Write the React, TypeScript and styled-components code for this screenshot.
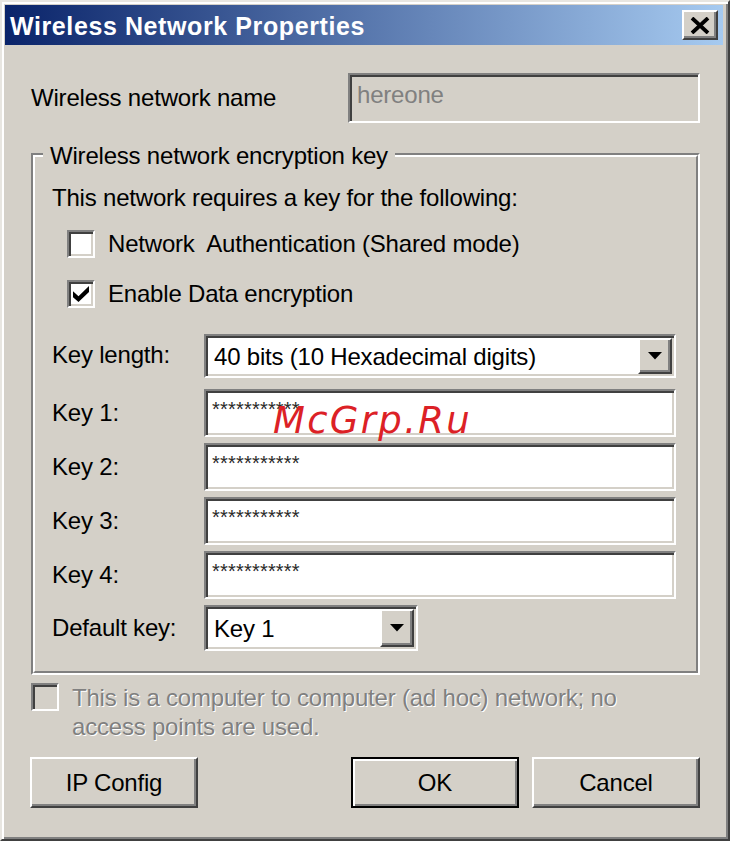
import React from "react";
import styled, { createGlobalStyle, css } from "styled-components";

const Global = createGlobalStyle`
  html, body { margin: 0; padding: 0; background: #d4d0c8; }
  body { width: 730px; height: 841px; overflow: hidden; font-family: "Liberation Sans", Arial, sans-serif; }
  * { box-sizing: border-box; }
`;

const FACE = "#d4d0c8";

const raised = css`
  border: 2px solid;
  border-color: #ffffff #404040 #404040 #ffffff;
  box-shadow: inset -2px -2px 0 #808080, inset 2px 2px 0 ${FACE};
  background: ${FACE};
`;

const sunken = css`
  border: 2px solid;
  border-color: #808080 #ffffff #ffffff #808080;
  box-shadow: inset 2px 2px 0 #404040, inset -2px -2px 0 ${FACE};
`;

const Window = styled.div`
  position: relative;
  width: 730px;
  height: 841px;
  background: ${FACE};
  border: 2px solid;
  border-color: #e8e6e1 #404040 #404040 #e8e6e1;
  box-shadow: inset 2px 2px 0 #ffffff, inset -2px -2px 0 #808080;
  padding: 3px 5px 4px 3px;
  display: flex;
  flex-direction: column;
`;

const TitleBar = styled.div`
  height: 40px;
  flex: none;
  background: linear-gradient(to right, #0a246a, #a6caf0);
  display: flex;
  align-items: center;
  justify-content: space-between;
  padding: 0 5px 0 5px;
`;

const TitleText = styled.div`
  color: #fff;
  font-weight: bold;
  font-size: 25px;
  letter-spacing: 0.6px;
  line-height: 30px;
  padding-top: 2px;
`;

const CloseButton = styled.div`
  ${raised};
  width: 36px;
  height: 30px;
  display: flex;
  align-items: center;
  justify-content: center;
`;

const Body = styled.div`
  flex: 1;
  display: flex;
  flex-direction: column;
  padding: 28px 23px 0 26px;
  font-size: 24px;
  letter-spacing: -0.2px;
  color: #000;
`;

const NameRow = styled.div`
  display: flex;
  align-items: center;
  justify-content: space-between;
  height: 50px;
`;

const Label = styled.div`
  font-size: 24px;
  line-height: 28px;
  white-space: nowrap;
`;

const TextField = styled.div<{ $disabled?: boolean; $h?: number }>`
  ${sunken};
  height: ${(p) => p.$h ?? 48}px;
  background: ${(p) => (p.$disabled ? FACE : "#fff")};
  color: ${(p) => (p.$disabled ? "#808080" : "#000")};
  padding: 4px 7px;
  line-height: 28px;
  white-space: nowrap;
`;

const NameField = styled(TextField)`
  width: 352px;
  padding-top: 6px;
`;

const PasswordField = styled(TextField)`
  font-size: 20px;
  line-height: 22px;
  letter-spacing: 0.2px;
  color: #2a2a2a;
  padding: 7px 6px;
`;

const GroupOuter = styled.div`
  position: relative;
  margin-top: 30px;
  border: 2px solid;
  border-color: #808080 #ffffff #ffffff #808080;
`;

const GroupInner = styled.div`
  border: 2px solid;
  border-color: #ffffff #808080 #808080 #ffffff;
  padding: 27px 20px 20px 17px;
  display: flex;
  flex-direction: column;
`;

const Legend = styled.div`
  position: absolute;
  top: -13px;
  left: 10px;
  padding: 0 7px;
  background: ${FACE};
  font-size: 24px;
  line-height: 28px;
`;

const CheckRow = styled.div<{ $mt: number; $ml?: number }>`
  display: flex;
  align-items: center;
  gap: 13px;
  height: 28px;
  margin-top: ${(p) => p.$mt}px;
  margin-left: ${(p) => p.$ml ?? 15}px;
`;

const Box = styled.div<{ $disabled?: boolean }>`
  ${sunken};
  width: 28px;
  height: 28px;
  flex: none;
  background: ${(p) => (p.$disabled ? FACE : "#fff")};
  display: flex;
  align-items: center;
  justify-content: center;
`;

const KeyGrid = styled.div`
  display: grid;
  grid-template-columns: 152px 1fr;
  row-gap: 6px;
  align-items: center;
  margin-top: 26px;
`;

const Select = styled.div<{ $w?: number; $h: number }>`
  ${sunken};
  background: #fff;
  height: ${(p) => p.$h}px;
  width: ${(p) => (p.$w ? `${p.$w}px` : "100%")};
  display: flex;
  align-items: center;
  padding: 2px 2px 2px 8px;
  line-height: 28px;
`;

const SelectText = styled.div`
  flex: 1;
  white-space: nowrap;
  padding-top: 1px;
`;

const DropButton = styled.div`
  ${raised};
  width: 34px;
  height: 100%;
  flex: none;
  display: flex;
  align-items: center;
  justify-content: center;
`;

const KeyLengthSelect = styled(Select)`
  margin-bottom: 5px;
`;

const KeyLengthLabel = styled(Label)`
  margin-bottom: 8px;
`;

const AdhocRow = styled.div`
  display: flex;
  align-items: flex-start;
  gap: 13px;
  margin-top: 8px;
`;

const DisabledText = styled.div`
  color: #808080;
  text-shadow: 1px 1px 0 #ffffff;
  line-height: 29px;
`;

const ButtonRow = styled.div`
  display: flex;
  margin-top: 16px;
  margin-left: -1px;
`;

const Button = styled.div<{ $default?: boolean; $ml?: number }>`
  width: 168px;
  height: 51px;
  display: flex;
  align-items: center;
  justify-content: center;
  font-size: 24px;
  margin-left: ${(p) => (p.$ml !== undefined ? `${p.$ml}px` : "0")};
  ${(p) =>
    p.$default
      ? css`
          border: 2px solid #000;
          box-shadow: inset 2px 2px 0 #ffffff, inset -2px -2px 0 #808080;
          background: ${FACE};
        `
      : raised}
`;

const Spacer = styled.div`
  flex: 1;
`;

const Watermark = styled.div`
  position: absolute;
  left: 271px;
  top: 400px;
  font-family: "DejaVu Sans", sans-serif;
  font-style: oblique;
  font-size: 37px;
  line-height: 37px;
  letter-spacing: 2.3px;
  color: #dc2126;
  pointer-events: none;
`;

const CheckMark = () => (
  <svg width="18" height="16" viewBox="0 0 7 7" style={{ display: "block" }}>
    <polygon points="0,2.3 2.4,4.5 7,0 7,2.6 2.4,7 0,4.9" fill="#000" />
  </svg>
);

const Arrow = () => (
  <svg width="14" height="8" viewBox="0 0 14 8" style={{ display: "block" }}>
    <polygon points="0,0 14,0 7,7.5" fill="#000" />
  </svg>
);

const CloseX = () => (
  <svg width="20" height="17" viewBox="0 0 20 17" style={{ display: "block" }}>
    <path d="M2 1 L18 16 M18 1 L2 16" stroke="#000" strokeWidth="3.8" />
  </svg>
);

const STARS = "***********";

export default function App() {
  return (
    <>
      <Global />
      <Window>
        <TitleBar>
          <TitleText>Wireless Network Properties</TitleText>
          <CloseButton>
            <CloseX />
          </CloseButton>
        </TitleBar>
        <Body>
          <NameRow>
            <Label>Wireless network name</Label>
            <NameField $disabled $h={50}>hereone</NameField>
          </NameRow>

          <GroupOuter>
            <Legend>Wireless network encryption key</Legend>
            <GroupInner>
              <Label>This network requires a key for the following:</Label>
              <CheckRow $mt={18}>
                <Box />
                <Label>Network&nbsp; Authentication (Shared mode)</Label>
              </CheckRow>
              <CheckRow $mt={22}>
                <Box>
                  <CheckMark />
                </Box>
                <Label>Enable Data encryption</Label>
              </CheckRow>

              <KeyGrid>
                <KeyLengthLabel>Key length:</KeyLengthLabel>
                <KeyLengthSelect $h={44}>
                  <SelectText>40 bits (10 Hexadecimal digits)</SelectText>
                  <DropButton>
                    <Arrow />
                  </DropButton>
                </KeyLengthSelect>

                {[1, 2, 3, 4].map((n) => (
                  <React.Fragment key={n}>
                    <Label>Key {n}:</Label>
                    <PasswordField>{STARS}</PasswordField>
                  </React.Fragment>
                ))}

                <Label>Default key:</Label>
                <Select $w={214} $h={46}>
                  <SelectText>Key 1</SelectText>
                  <DropButton>
                    <Arrow />
                  </DropButton>
                </Select>
              </KeyGrid>
            </GroupInner>
          </GroupOuter>

          <AdhocRow>
            <Box $disabled />
            <DisabledText>
              This is a computer to computer (ad hoc) network; no
              <br />
              access points are used.
            </DisabledText>
          </AdhocRow>

          <ButtonRow>
            <Button>IP Config</Button>
            <Spacer />
            <Button $default>OK</Button>
            <Button $ml={13}>Cancel</Button>
          </ButtonRow>
        </Body>
        <Watermark>McGrp.Ru</Watermark>
      </Window>
    </>
  );
}
